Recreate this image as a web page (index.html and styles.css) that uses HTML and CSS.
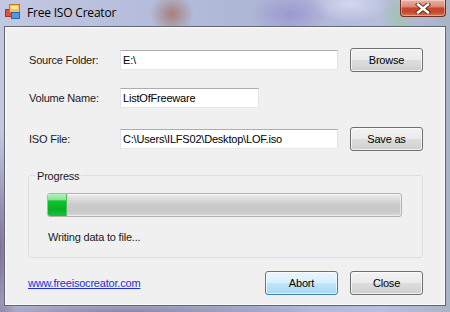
FILE: index.html
```html
<!DOCTYPE html>
<html>
<head>
<meta charset="utf-8">
<title>Free ISO Creator</title>
<link rel="stylesheet" href="styles.css">
</head>
<body>
<div class="frame">
  <div class="titlebar">
    <svg class="app-icon" width="16" height="16" viewBox="0 0 16 16">
      <rect x="0.5" y="5.5" width="6" height="7" fill="#e0503a" stroke="#a8321e"/>
      <rect x="4.5" y="0.5" width="10" height="8" fill="#f2c25a" stroke="#c07a22"/>
      <rect x="6" y="2" width="7" height="3" fill="#fbe6a8"/>
      <rect x="6.5" y="8.5" width="8" height="6" fill="#4c9be8" stroke="#2a64b0"/>
    </svg>
    <span class="title">Free ISO Creator</span>
    <div class="caption-close">
      <svg width="16" height="11" viewBox="0 0 16 11">
        <path d="M3 1.5 L13 9.5 M13 1.5 L3 9.5" stroke="#5a2a22" stroke-width="4.2" stroke-linecap="square"/>
        <path d="M3 1.5 L13 9.5 M13 1.5 L3 9.5" stroke="#ffffff" stroke-width="2.4" stroke-linecap="square"/>
      </svg>
    </div>
  </div>
  <div class="client">
    <div class="form">
      <div class="row">
        <span class="label">Source Folder:</span>
        <div class="field field--wide">E:\</div>
        <div class="btn">Browse</div>
      </div>
      <div class="row row--mid">
        <span class="label">Volume Name:</span>
        <div class="field field--short">ListOfFreeware</div>
      </div>
      <div class="row row--last">
        <span class="label">ISO File:</span>
        <div class="field field--wide">C:\Users\ILFS02\Desktop\LOF.iso</div>
        <div class="btn">Save as</div>
      </div>
    </div>
    <div class="group">
      <span class="group-title">Progress</span>
      <div class="progress"><div class="progress-fill" style="width:19px"></div></div>
      <div class="status">Writing data to file...</div>
    </div>
    <div class="footer">
      <a class="link" href="#">www.freeisocreator.com</a>
      <div class="footer-buttons">
        <div class="btn btn--default">Abort</div>
        <div class="btn">Close</div>
      </div>
    </div>
  </div>
</div>
</body>
</html>
```

FILE: styles.css
```css
* { box-sizing: border-box; }
html, body { margin: 0; padding: 0; }
body {
  width: 450px;
  height: 312px;
  overflow: hidden;
  font-family: "Liberation Sans", Arial, sans-serif;
  font-size: 11px;
  letter-spacing: -0.2px;
  color: #000;
}
.frame {
  width: 450px;
  height: 312px;
  display: flex;
  flex-direction: column;
  padding: 0 4px 6px 4px;
  background:
    radial-gradient(ellipse 22px 20px at 172px 14px, rgba(160,110,90,0.75), rgba(160,110,90,0) 100%),
    radial-gradient(ellipse 40px 22px at 290px 14px, rgba(150,145,205,0.8), rgba(150,145,205,0) 100%),
    radial-gradient(ellipse 40px 18px at 350px 4px, rgba(215,218,240,0.9), rgba(215,218,240,0) 100%),
    radial-gradient(ellipse 20px 30px at 398px 18px, rgba(160,195,170,0.8), rgba(160,195,170,0) 100%),
    radial-gradient(ellipse 18px 120px at 0px 250px, rgba(110,90,130,0.8), rgba(110,90,130,0) 100%),
    radial-gradient(ellipse 200px 12px at 120px 312px, rgba(120,110,140,0.7), rgba(120,110,140,0) 100%),
    linear-gradient(90deg, #c3c8e2 0%, #b3bcda 35%, #aeb6d6 60%, #b8bedd 85%, #a9b4c4 100%);
}
.titlebar {
  height: 26px;
  display: flex;
  align-items: flex-start;
}
.app-icon {
  margin: 4px 0 0 1px;
  flex: none;
}
.title {
  margin: 5px 0 0 6px;
  font-family: "Open Sans", "Liberation Sans", sans-serif;
  font-size: 12px;
  line-height: 16px;
  color: #000;
  letter-spacing: -0.2px;
}
.caption-close {
  margin-left: auto;
  width: 46px;
  height: 17px;
  border: 1px solid #6e2e22;
  border-top: none;
  border-radius: 0 0 4px 4px;
  background: linear-gradient(180deg, #e9b2a4 0%, #de8a74 40%, #c9452a 52%, #c24a2e 75%, #d77a58 100%);
  box-shadow: inset 0 0 0 1px rgba(255,255,255,0.35);
  display: flex;
  align-items: center;
  justify-content: center;
}
.client {
  flex: 1;
  display: flex;
  flex-direction: column;
  background: #f0f0f0;
  border: 1px solid #5f6675;
  box-shadow: inset 0 0 0 1px #fbfbfb;
  padding: 21px 22px 10px 23px;
}
.form {
  display: flex;
  flex-direction: column;
}
.row {
  height: 24px;
  display: flex;
  align-items: center;
}
.row--mid { margin-top: 14px; }
.row--last { margin-top: 17px; }
.label {
  width: 92px;
  padding-left: 1px;
  flex: none;
  color: #1a1a1a;
}
.field {
  height: 20px;
  background: #fff;
  border: 1px solid #e2e3ea;
  border-top-color: #abadb3;
  border-bottom-color: #e3e9ef;
  padding: 0 0 0 2px;
  line-height: 18px;
  white-space: nowrap;
  overflow: hidden;
  color: #000;
}
.field--wide { width: 218px; }
.field--short { width: 139px; }
.row .btn { margin-left: auto; }
.btn {
  width: 73px;
  height: 24px;
  border: 1px solid #707070;
  border-radius: 3px;
  background: linear-gradient(180deg, #f2f2f2 0%, #ebebeb 48%, #dddddd 52%, #cfcfcf 100%);
  box-shadow: inset 0 0 0 1px rgba(255,255,255,0.7);
  display: flex;
  align-items: center;
  justify-content: center;
  color: #000;
}
.btn--default {
  border-color: #3c7fb1;
  background: linear-gradient(180deg, #eaf6fd 0%, #d9f0fc 48%, #bee6fd 52%, #a7d9f5 100%);
}
.group {
  margin-top: 24px;
  border: 1px solid #dadfe2;
  border-radius: 3px;
  padding: 0 20px 13px 18px;
  display: flex;
  flex-direction: column;
}
.group-title {
  align-self: flex-start;
  margin: -7px 0 0 -12px;
  padding: 0 2px;
  background: #f0f0f0;
  line-height: 14px;
  color: #1a1a1a;
}
.progress {
  margin-top: 10px;
  height: 24px;
  border: 1px solid #b2b2b2;
  border-radius: 3px;
  background: linear-gradient(180deg, #f0f0f0 0%, #dedede 20%, #cbcbcb 50%, #c9c9c9 80%, #d8d8d8 100%);
  box-shadow: inset 0 0 0 1px rgba(255,255,255,0.5);
  overflow: hidden;
  display: flex;
}
.progress-fill {
  height: 100%;
  border-right: 1px solid #4cc25c;
  background: linear-gradient(180deg, #b8eec0 0%, #8ee29a 25%, #10c428 32%, #06b025 70%, #1ac23a 100%);
}
.status {
  margin-top: 13px;
  line-height: 14px;
  padding-left: 1px;
  color: #1a1a1a;
}
.footer {
  margin-top: auto;
  display: flex;
  align-items: center;
}
.link {
  color: #1a2ee6;
  text-decoration: underline;
}
.footer-buttons {
  margin-left: auto;
  display: flex;
  gap: 12px;
}
```
